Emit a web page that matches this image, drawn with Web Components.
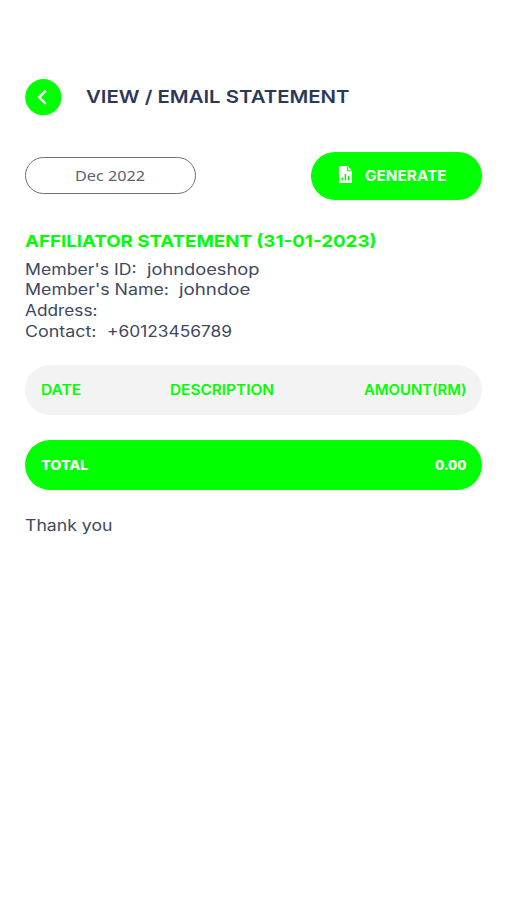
<!DOCTYPE html>
<html lang="en">
<head>
<meta charset="utf-8">
<title>View / Email Statement</title>
<style>
  html, body { margin: 0; background: #fff; }
  body { font-family: Inter, "Open Sans", sans-serif; }
</style>
</head>
<body>
<statement-page></statement-page>

<script>
// A line of text stretched horizontally to the width given in its attribute.
class FitText extends HTMLElement {
  connectedCallback() {
    const w = parseFloat(this.getAttribute('width'));
    const root = this.attachShadow({ mode: 'open' });
    root.innerHTML = `<style>
      :host { display: block; flex: none; width: ${w}px; white-space: pre; }
      span { display: inline-block; vertical-align: top; transform-origin: 0 50%; }
    </style><span><slot></slot></span>`;
    const span = root.querySelector('span');
    span.style.transform = `scaleX(${w / span.getBoundingClientRect().width})`;
  }
}

class BackButton extends HTMLElement {
  constructor() {
    super();
    this.attachShadow({ mode: 'open' }).innerHTML = `<style>
      :host { display: block; flex: none; width: 37px; height: 37px; }
      svg { display: block; }
    </style>
    <svg width="37" height="37" viewBox="0 0 37 37" role="img" aria-label="Back">
      <circle cx="18.3" cy="18.2" r="18.1" fill="#00ff00"/>
      <path d="M20.7 11.6 L14.2 18.3 L20.7 25" fill="none" stroke="#fff" stroke-width="2.5"/>
    </svg>`;
  }
}

class PageHeader extends HTMLElement {
  constructor() {
    super();
    this.attachShadow({ mode: 'open' }).innerHTML = `<style>
      :host { display: flex; align-items: center; gap: 24px; height: 37px; color: #2c3858;
              font-size: 17.5px; font-weight: 620; line-height: 35px; }
      .title { height: 37px; }
    </style>
    <back-button></back-button><div class="title"><slot></slot></div>`;
  }
}

class MonthField extends HTMLElement {
  constructor() {
    super();
    this.attachShadow({ mode: 'open' }).innerHTML = `<style>
      :host { display: flex; justify-content: center; box-sizing: border-box; width: 171px; height: 37px;
              padding-right: 2px; border: 1px solid #6c7078; border-radius: 19px; color: #5c6270;
              font: 14px/36px "Noto Sans", sans-serif; }
    </style><slot></slot>`;
  }
}

class GenerateButton extends HTMLElement {
  constructor() {
    super();
    this.attachShadow({ mode: 'open' }).innerHTML = `<style>
      :host { display: flex; align-items: center; gap: 12.5px; box-sizing: border-box; width: 171px; height: 48px;
              padding-left: 28px; border-radius: 24px; background: #00ff00; color: #fff;
              font-size: 14px; font-weight: 650; line-height: 48px; }
      svg { display: block; flex: none; margin-bottom: 2px; }
    </style>
    <svg width="13" height="17" viewBox="0 0 13 17">
      <path d="M1 0H8.6L13 4.5V16Q13 17 12 17H1Q0 17 0 16V1Q0 0 1 0Z" fill="#fff"/>
      <path d="M8.4 .6V4.7H12.5" fill="none" stroke="#00ff00" stroke-width="1"/>
      <path d="M3.3 11.5V14.5M6.4 8V14.5M9.6 10V14.5" stroke="#00ff00" stroke-width="1.5"/>
    </svg><slot></slot>`;
  }
}

class MemberDetails extends HTMLElement {
  constructor() {
    super();
    this.attachShadow({ mode: 'open' }).innerHTML = `<style>
      :host { display: block; margin-top: 29px; color: #3f4862; font-size: 15.2px; line-height: 20.8px; }
      .heading { height: 31px; color: #00ff00; font-size: 16.5px; font-weight: 680; line-height: 24px; }
    </style>
    <div class="heading"><slot name="heading"></slot></div><slot></slot>`;
  }
}

// A label with its value beside it.
class DetailLine extends HTMLElement {
  constructor() {
    super();
    this.attachShadow({ mode: 'open' }).innerHTML = `<style>
      :host { display: flex; gap: 10px; }
    </style><slot></slot>`;
  }
}

class StatementRow extends HTMLElement {
  constructor() {
    super();
    this.attachShadow({ mode: 'open' }).innerHTML = `<style>
      :host { display: flex; justify-content: space-between; box-sizing: border-box; height: 50px;
              padding: 0 16px; border-radius: 25px; background: #f3f3f3; color: #00ff00;
              font-size: 13.8px; font-weight: 620; line-height: 51px; }
      :host([total]) { background: #00ff00; color: #fff; font-weight: 800; }
    </style><slot></slot>`;
  }
}

class StatementPage extends HTMLElement {
  constructor() {
    super();
    this.attachShadow({ mode: 'open' }).innerHTML = `<style>
      :host { display: block; box-sizing: border-box; height: 900px; padding: 79px 24px 0 25px; overflow: hidden; }
      .actions { display: flex; align-items: center; justify-content: space-between; margin-top: 35.5px; }
      .head { margin-top: 22.5px; }
      .total { margin-top: 24.5px; }
      .thanks { margin-top: 25px; color: #3f4862; font-size: 15.2px; line-height: 21px; }
    </style>
    <page-header><fit-text width="263.5">VIEW / EMAIL STATEMENT</fit-text></page-header>
    <div class="actions">
      <month-field><fit-text width="70">Dec 2022</fit-text></month-field>
      <generate-button><fit-text width="81.5">GENERATE</fit-text></generate-button>
    </div>
    <member-details>
      <fit-text slot="heading" width="351.5">AFFILIATOR STATEMENT (31-01-2023)</fit-text>
      <detail-line><fit-text width="111.5">Member's ID:</fit-text><fit-text width="112.5">johndoeshop</fit-text></detail-line>
      <detail-line><fit-text width="144">Member's Name:</fit-text><fit-text width="71.5">johndoe</fit-text></detail-line>
      <detail-line><fit-text width="72.5">Address:</fit-text></detail-line>
      <detail-line><fit-text width="71.5">Contact:</fit-text><fit-text width="125">+60123456789</fit-text></detail-line>
    </member-details>
    <statement-row class="head">
      <fit-text width="40">DATE</fit-text>
      <fit-text width="104">DESCRIPTION</fit-text>
      <fit-text width="102.5">AMOUNT(RM)</fit-text>
    </statement-row>
    <statement-row class="total" total>
      <fit-text width="47.5">TOTAL</fit-text>
      <fit-text width="31.5">0.00</fit-text>
    </statement-row>
    <div class="thanks"><fit-text width="87.5">Thank you</fit-text></div>`;
  }
}

customElements.define('back-button', BackButton);
customElements.define('page-header', PageHeader);
customElements.define('month-field', MonthField);
customElements.define('generate-button', GenerateButton);
customElements.define('member-details', MemberDetails);
customElements.define('detail-line', DetailLine);
customElements.define('statement-row', StatementRow);
customElements.define('statement-page', StatementPage);
customElements.define('fit-text', FitText);
</script>
</body>
</html>
